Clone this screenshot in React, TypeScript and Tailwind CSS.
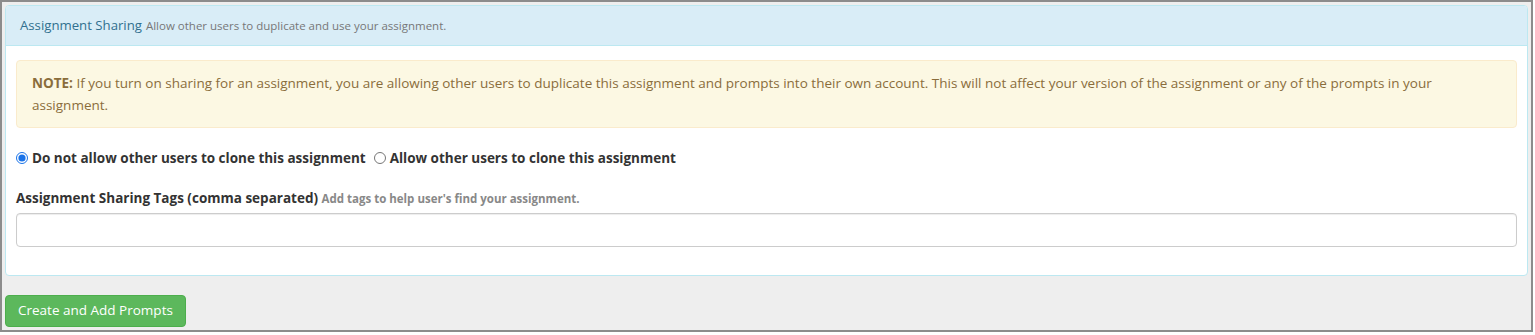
export default function App() {
	return (
		<div className="h-[335px] w-[1535px] bg-white font-['Open_Sans',sans-serif]">
			<div className="flex h-[332px] w-[1533px] flex-col border-2 border-[#8c8c8c] bg-[#eeeeee] px-[3px] pt-[3px]">
				<section className="rounded-[4px] border border-[#bce8f1] bg-white">
					<header className="flex h-[40px] items-center gap-[4px] rounded-t-[3px] border-[#bce8f1] border-b bg-[#d9edf7] px-[14px]">
						<h3 className="text-[13.2px] text-[#31708f]">Assignment Sharing</h3>
						<span className="text-[11.5px] text-[#777]">
							Allow other users to duplicate and use your assignment.
						</span>
					</header>
					<div className="px-[10px] pt-[14px] pb-[28px]">
						<div className="rounded-[4px] border border-[#faebcc] bg-[#fcf8e3] px-[15px] py-[11px] text-[13.5px] leading-[22px] text-[#8a6d3b]">
							<strong className="font-bold">NOTE:</strong> If you turn on sharing
							for an assignment, you are allowing other users to duplicate this
							assignment and prompts into their own account. This will not affect
							your version of the assignment or any of the prompts in your
							assignment.
						</div>

						<div className="mt-[20px] flex items-center gap-[8px] text-[13.5px] font-bold text-[#333]">
							<label className="flex items-center gap-[4px]">
								<input
									type="radio"
									name="sharing"
									defaultChecked
									className="m-0 h-[12px] w-[12px] accent-[#1a73e8]"
								/>
								Do not allow other users to clone this assignment
							</label>
							<label className="flex items-center gap-[4px]">
								<input
									type="radio"
									name="sharing"
									className="m-0 h-[12px] w-[12px]"
								/>
								Allow other users to clone this assignment
							</label>
						</div>

						<div className="mt-[20px]">
							<label className="block text-[13.5px] font-bold text-[#333]">
								Assignment Sharing Tags (comma separated){" "}
								<span className="text-[11.5px] text-[#888]">
									Add tags to help user's find your assignment.
								</span>
							</label>
							<input
								type="text"
								className="mt-[4px] block h-[34px] w-full rounded-[4px] border border-[#ccc] bg-white px-[12px] text-[14px] shadow-[inset_0_1px_1px_rgba(0,0,0,0.075)]"
							/>
						</div>
					</div>
				</section>

				<div className="mt-[19px]">
					<button className="h-[32px] rounded-[4px] border border-[#4cae4c] bg-[#5cb85c] px-[12px] text-[13.5px] text-white">
						Create and Add Prompts
					</button>
				</div>
			</div>
		</div>
	);
}
